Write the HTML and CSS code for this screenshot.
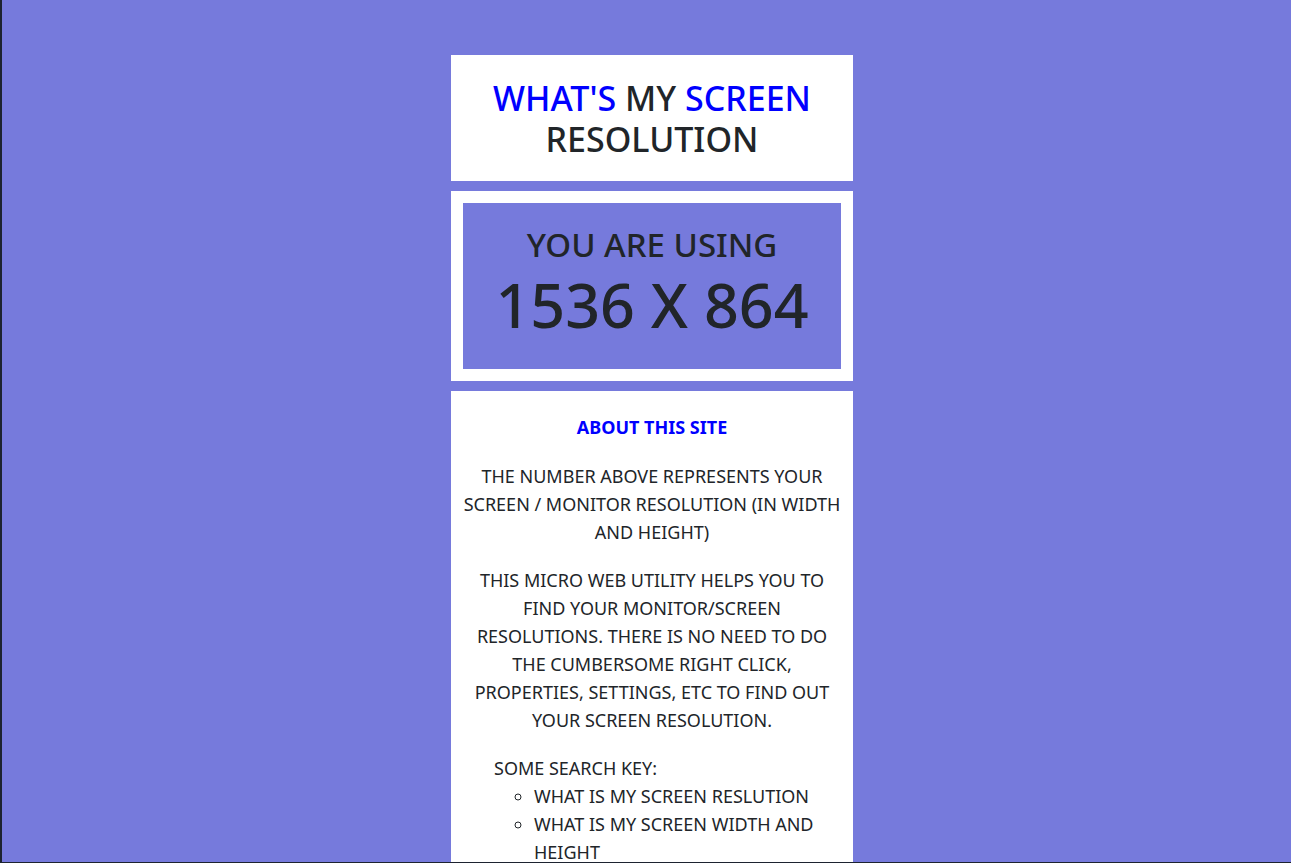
FILE: index.html
```
<!DOCTYPE html>
<html lang="en">
<head>
<meta charset="utf-8">
<title>What's my screen resolution</title>
<link rel="stylesheet" href="styles.css">
</head>
<body>
<main class="page">
  <section class="card title-card">
    <h1 class="title"><span class="blue">WHAT'S</span> MY <span class="blue">SCREEN</span> RESOLUTION</h1>
  </section>
  <section class="card result-card">
    <div class="result">
      <div class="using">YOU ARE USING</div>
      <div class="size">1536 X 864</div>
    </div>
  </section>
  <section class="card about-card">
    <h2 class="about-title">ABOUT THIS SITE</h2>
    <p class="text">THE NUMBER ABOVE REPRESENTS YOUR SCREEN / MONITOR RESOLUTION (IN WIDTH AND HEIGHT)</p>
    <p class="text">THIS MICRO WEB UTILITY HELPS YOU TO FIND YOUR MONITOR/SCREEN RESOLUTIONS. THERE IS NO NEED TO DO THE CUMBERSOME RIGHT CLICK, PROPERTIES, SETTINGS, ETC TO FIND OUT YOUR SCREEN RESOLUTION.</p>
    <div class="keys">
      SOME SEARCH KEY:
      <ul class="key-list">
        <li>WHAT IS MY SCREEN RESLUTION</li>
        <li>WHAT IS MY SCREEN WIDTH AND HEIGHT</li>
        <li>SCREEN RESOLUTION CHECKER</li>
      </ul>
    </div>
  </section>
</main>
</body>
</html>
```
FILE: styles.css
```
html, body {
  margin: 0;
  padding: 0;
  height: 100%;
}
body {
  background: #767adc;
  font-family: "Noto Sans", "Open Sans", sans-serif;
  color: #212529;
  overflow: hidden;
  border-left: 2px solid #1d2330;
  border-bottom: 1px solid #1d2330;
  box-sizing: border-box;
}
.page {
  display: flex;
  flex-direction: column;
  align-items: center;
  gap: 10px;
  padding-top: 55px;
  padding-left: 11px;
}
.card {
  width: 402px;
  background: #ffffff;
  box-sizing: border-box;
}
.title-card {
  padding: 23px 12px 21px;
  text-align: center;
}
.title {
  margin: 0;
  font-size: 34px;
  font-weight: 500;
  line-height: 41px;
}
.blue {
  color: #0000ff;
}
.result-card {
  padding: 12px;
}
.result {
  background: #767adc;
  height: 166px;
  box-sizing: border-box;
  text-align: center;
  padding-top: 22px;
}
.using {
  font-size: 33px;
  line-height: 40px;
  font-weight: 500;
}
.size {
  font-size: 61px;
  line-height: 80px;
  font-weight: 500;
}
.about-card {
  padding: 21px 12px 20px;
  text-align: center;
}
.about-title {
  margin: 0 0 20px;
  font-size: 18px;
  line-height: 30px;
  font-weight: 700;
  color: #0000ff;
}
.text {
  margin: 0 0 20px;
  font-size: 18px;
  line-height: 28px;
  font-weight: 400;
}
.keys {
  text-align: left;
  padding-left: 31px;
  font-size: 18px;
  line-height: 28px;
}
.key-list {
  margin: 0;
  padding-left: 40px;
  list-style: circle;
}
```
